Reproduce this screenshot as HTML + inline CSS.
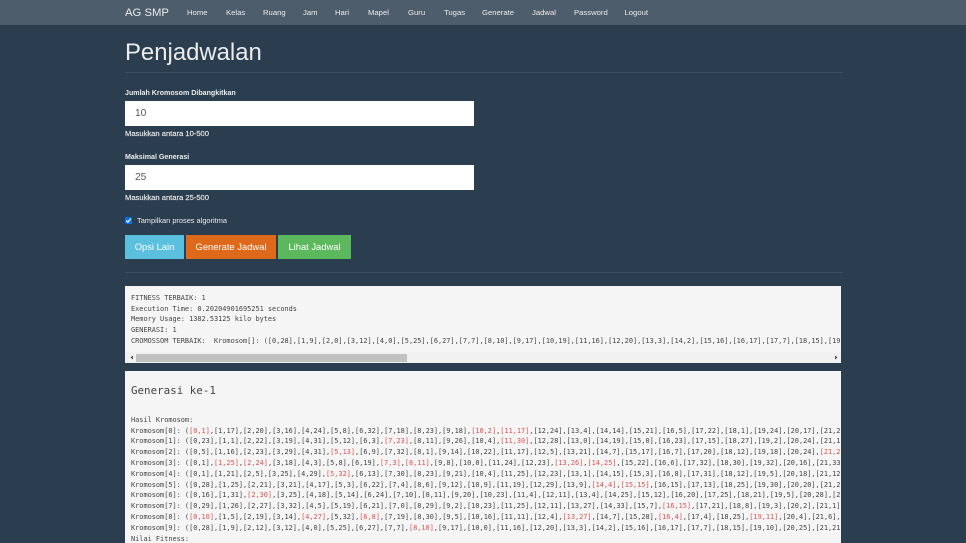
<!DOCTYPE html>
<html lang="id">
<head>
<meta charset="utf-8">
<title>Penjadwalan</title>
<style>
html,body{margin:0;padding:0;width:966px;height:543px;overflow:hidden;background:#2b3e50;font-family:"Liberation Sans",sans-serif;color:#ebebeb}
#w{position:absolute;left:0;top:0;width:966px;height:543px;filter:blur(.3px)}
.a{position:absolute;white-space:nowrap}
#nav{left:0;top:0;width:966px;height:25px;background:#4e5d6c}
.n{top:8.2px;font-size:7.7px;line-height:10px;color:#ebebeb}
.lb{font-size:7.1px;line-height:10px;font-weight:bold;color:#ebebeb;left:125px}
.hp{font-size:7.6px;line-height:10px;color:#ebebeb;left:125px;-webkit-text-stroke:.15px #ebebeb}
.in{left:125px;width:349px;height:25px;background:#fff;box-sizing:border-box;padding-left:10px;font-size:10.2px;line-height:25px;color:#555}
.b{top:235px;height:24px;line-height:24px;color:#fff;font-size:9.4px;text-align:center}
.hr{left:125px;width:718px;height:1px;background:#3c4f61}
pre{margin:0;position:absolute;background:#f5f5f5;overflow:hidden;font-family:"DejaVu Sans Mono","Liberation Mono",monospace;font-size:6.9px;color:#444}
.l{position:absolute;left:6px;white-space:pre;line-height:11px;font-size:6.9px}
i{font-style:normal;color:#e0524f}
</style>
</head>
<body>
<div id="w">
<div class="a" id="nav"></div>
<div class="a" style="left:125px;top:5.5px;font-size:11.3px;line-height:15px;color:#ebebeb">AG SMP</div>
<div class="a n" style="left:187px">Home</div>
<div class="a n" style="left:226px">Kelas</div>
<div class="a n" style="left:263px">Ruang</div>
<div class="a n" style="left:303px">Jam</div>
<div class="a n" style="left:335px">Hari</div>
<div class="a n" style="left:368px">Mapel</div>
<div class="a n" style="left:408px">Guru</div>
<div class="a n" style="left:444px">Tugas</div>
<div class="a n" style="left:482px">Generate</div>
<div class="a n" style="left:532px">Jadwal</div>
<div class="a n" style="left:574px">Password</div>
<div class="a n" style="left:624.5px">Logout</div>

<div class="a" style="left:125px;top:38px;font-size:23.9px;line-height:30px;color:#ebebeb">Penjadwalan</div>
<div class="a hr" style="top:72px"></div>

<div class="a lb" style="top:88px">Jumlah Kromosom Dibangkitkan</div>
<div class="a in" style="top:101px">10</div>
<div class="a hp" style="top:129px">Masukkan antara 10-500</div>

<div class="a lb" style="top:152px">Maksimal Generasi</div>
<div class="a in" style="top:165px">25</div>
<div class="a hp" style="top:193px">Masukkan antara 25-500</div>

<div class="a" style="left:125px;top:217px;width:7px;height:7px;background:#0b6fe8;border-radius:1px"><svg width="7" height="7" viewBox="0 0 7 7" style="display:block"><path d="M1.2 3.6 L2.9 5.2 L5.8 1.6" stroke="#fff" stroke-width="1.2" fill="none"/></svg></div>
<div class="a" style="left:137px;top:215.5px;font-size:7.4px;line-height:10px;color:#ebebeb">Tampilkan proses algoritma</div>

<div class="a b" style="left:125px;width:59px;background:#5bc0de">Opsi Lain</div>
<div class="a b" style="left:186px;width:90px;background:#df691a">Generate Jadwal</div>
<div class="a b" style="left:278px;width:73px;background:#5cb85c">Lihat Jadwal</div>
<div class="a hr" style="top:272px"></div>

<pre style="left:125px;top:286px;width:716px;height:77px"><span class="l" style="top:6.6px">FITNESS TERBAIK: 1</span><span class="l" style="top:17.5px">Execution Time: 0.20204901695251 seconds</span><span class="l" style="top:28.4px">Memory Usage: 1382.53125 kilo bytes</span><span class="l" style="top:39.3px">GENERASI: 1</span><span class="l" style="top:50.2px">CROMOSSOM TERBAIK:  Kromosom[]: ([0,28],[1,9],[2,0],[3,12],[4,0],[5,25],[6,27],[7,7],[8,10],[9,17],[10,19],[11,16],[12,20],[13,3],[14,2],[15,16],[16,17],[17,7],[18,15],[19</span><span style="position:absolute;left:0;top:66px;width:716px;height:11px;background:#f1f1f1"></span><span style="position:absolute;left:11px;top:68px;width:271px;height:8px;background:#c1c1c1"></span><svg style="position:absolute;left:0;top:66px" width="716" height="11"><path d="M8 3.5 V7.5 L5.5 5.5Z M710 3.5 V7.5 L712.5 5.5Z" fill="#505050"/></svg></pre>

<pre style="left:125px;top:371px;width:716px;height:172px"><span class="l" style="top:14px;font-size:10.85px">Generasi ke-1</span><span class="l" style="top:44px">Hasil Kromosom:</span><span class="l" style="top:54.5px">Kromosom[0]: (<i>[0,1]</i>,[1,17],[2,20],[3,16],[4,24],[5,8],[6,32],[7,18],[8,23],[9,18],<i>[10,2]</i>,<i>[11,17]</i>,[12,24],[13,4],[14,14],[15,21],[16,5],[17,22],[18,1],[19,24],[20,17],[21,2</span><span class="l" style="top:65.3px">Kromosom[1]: ([0,23],[1,1],[2,22],[3,19],[4,31],[5,12],[6,3],<i>[7,23]</i>,[8,11],[9,26],[10,4],<i>[11,30]</i>,[12,28],[13,0],[14,19],[15,0],[16,23],[17,15],[18,27],[19,2],[20,24],[21,1</span><span class="l" style="top:76.1px">Kromosom[2]: ([0,5],[1,16],[2,23],[3,29],[4,31],<i>[5,13]</i>,[6,9],[7,32],[8,1],[9,14],[10,22],[11,17],[12,5],[13,21],[14,7],[15,17],[16,7],[17,20],[18,12],[19,18],[20,24],<i>[21,2</i></span><span class="l" style="top:86.9px">Kromosom[3]: ([0,1],<i>[1,25]</i>,<i>[2,24]</i>,[3,18],[4,3],[5,8],[6,19],<i>[7,3]</i>,<i>[8,11]</i>,[9,8],[10,0],[11,24],[12,23],<i>[13,26]</i>,<i>[14,25]</i>,[15,22],[16,6],[17,32],[18,30],[19,32],[20,16],[21,33</span><span class="l" style="top:97.7px">Kromosom[4]: ([0,1],[1,21],[2,5],[3,25],[4,29],<i>[5,32]</i>,[6,13],[7,30],[8,23],[9,21],[10,4],[11,25],[12,23],[13,1],[14,15],[15,3],[16,8],[17,31],[18,12],[19,5],[20,18],[21,12</span><span class="l" style="top:108.5px">Kromosom[5]: ([0,28],[1,25],[2,21],[3,21],[4,17],[5,3],[6,22],[7,4],[8,6],[9,12],[10,9],[11,19],[12,29],[13,9],<i>[14,4]</i>,<i>[15,15]</i>,[16,15],[17,13],[18,25],[19,30],[20,20],[21,2</span><span class="l" style="top:119.3px">Kromosom[6]: ([0,16],[1,31],<i>[2,30]</i>,[3,25],[4,18],[5,14],[6,24],[7,10],[8,11],[9,20],[10,23],[11,4],[12,11],[13,4],[14,25],[15,12],[16,20],[17,25],[18,21],[19,5],[20,28],[2</span><span class="l" style="top:130.1px">Kromosom[7]: ([0,29],[1,26],[2,27],[3,32],[4,5],[5,19],[6,21],[7,0],[8,29],[9,2],[10,23],[11,25],[12,11],[13,27],[14,33],[15,7],<i>[16,15]</i>,[17,21],[18,8],[19,3],[20,2],[21,1]</span><span class="l" style="top:140.9px">Kromosom[8]: (<i>[0,10]</i>,[1,5],[2,19],[3,14],<i>[4,27]</i>,[5,32],<i>[6,8]</i>,[7,19],[8,30],[9,5],[10,16],[11,11],[12,4],<i>[13,27]</i>,[14,7],[15,28],<i>[16,4]</i>,[17,4],[18,25],<i>[19,11]</i>,[20,4],[21,6],</span><span class="l" style="top:151.7px">Kromosom[9]: ([0,28],[1,9],[2,12],[3,12],[4,0],[5,25],[6,27],[7,7],<i>[8,10]</i>,[9,17],[10,0],[11,16],[12,20],[13,3],[14,2],[15,16],[16,17],[17,7],[18,15],[19,10],[20,25],[21,21</span><span class="l" style="top:162.5px">Nilai Fitness:</span></pre>
</div>
</body>
</html>
